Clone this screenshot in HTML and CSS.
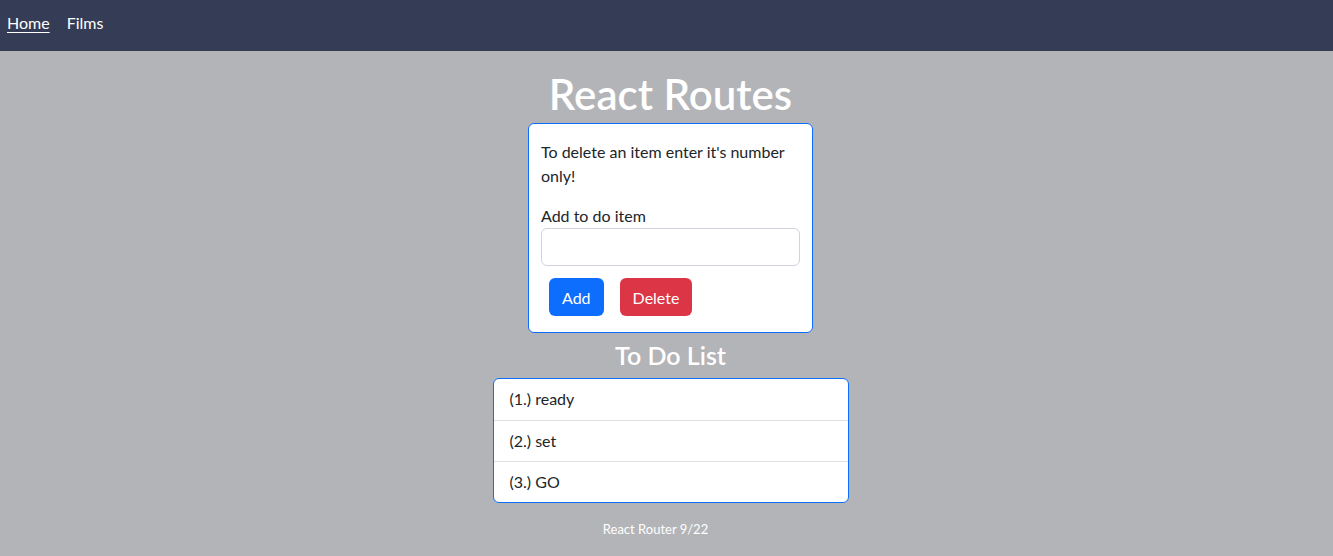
FILE: index.html
```html
<!DOCTYPE html>
<html>
<head>
<meta charset="utf-8">
<title>React Routes</title>
<link rel="stylesheet" href="styles.css">
</head>
<body>
<nav class="navbar">
  <a class="nav-link active" href="#">Home</a>
  <a class="nav-link" href="#">Films</a>
</nav>
<main class="main">
  <h1 class="title">React Routes</h1>
  <form class="card">
    <p class="hint">To delete an item enter it's number only!</p>
    <label class="label" for="item">Add to do item</label>
    <input class="input" id="item" type="text">
    <div class="actions">
      <button type="button" class="btn btn-primary">Add</button>
      <button type="button" class="btn btn-danger">Delete</button>
    </div>
  </form>
  <h2 class="subtitle">To Do List</h2>
  <ul class="list">
    <li class="list-item">(1.) ready</li>
    <li class="list-item">(2.) set</li>
    <li class="list-item">(3.) GO</li>
  </ul>
  <footer class="footer">React Router 9/22</footer>
</main>
</body>
</html>
```
FILE: styles.css
```css
* { box-sizing: border-box; }
html, body { margin: 0; padding: 0; }
body {
  background: #b3b4b8;
  font-family: "Lato", "Noto Sans", sans-serif;
  font-size: 16px;
  color: #212529;
  height: 556px;
  overflow: hidden;
}
.navbar {
  height: 51px;
  background: #343d55;
  display: flex;
  align-items: center;
  padding: 0 7px 6px;
  gap: 17px;
}
.nav-link {
  color: #ffffff;
  text-decoration: none;
  font-size: 16px;
  line-height: 24px;
}
.nav-link.active { text-decoration: underline; text-underline-offset: 3px; }
.main {
  display: flex;
  flex-direction: column;
  align-items: center;
  padding-left: 8px;
}
.title {
  margin: 19px 0 5px;
  font-size: 42px;
  font-weight: 600;
  line-height: 48px;
  color: #ffffff;
}
.card {
  width: 285px;
  background: #fff;
  border: 1px solid #0d6efd;
  border-radius: 6px;
  padding: 16px 12px 16px 12px;
  display: flex;
  flex-direction: column;
}
.hint {
  margin: 0 0 16px;
  line-height: 24px;
}
.label {
  line-height: 24px;
}
.input {
  height: 38px;
  width: 100%;
  border: 1px solid #ced4da;
  border-radius: 6px;
  font: inherit;
}
.actions {
  display: flex;
  gap: 16px;
  margin-top: 12px;
  padding-left: 8px;
}
.btn {
  height: 38px;
  border: none;
  border-radius: 6px;
  padding: 0 13px;
  color: #fff;
  font: inherit;
  font-size: 16px;
}
.btn-primary { background: #0d6efd; }
.btn-danger { background: #dc3545; }
.subtitle {
  margin: 8px 0 8px;
  font-size: 25px;
  font-weight: 600;
  line-height: 29px;
  color: #fff;
}
.list {
  list-style: none;
  margin: 0;
  padding: 0;
  width: 356px;
  background: #fff;
  border: 1px solid #0d6efd;
  border-radius: 6px;
}
.list-item {
  height: 41px;
  padding: 0 16px 2px;
  display: flex;
  align-items: center;
  border-top: 1px solid #dee2e6;
}
.list-item:first-child { border-top: none; }
.footer {
  margin-top: 18px;
  font-size: 13px;
  color: #fff;
  padding-right: 30px;
}
```
